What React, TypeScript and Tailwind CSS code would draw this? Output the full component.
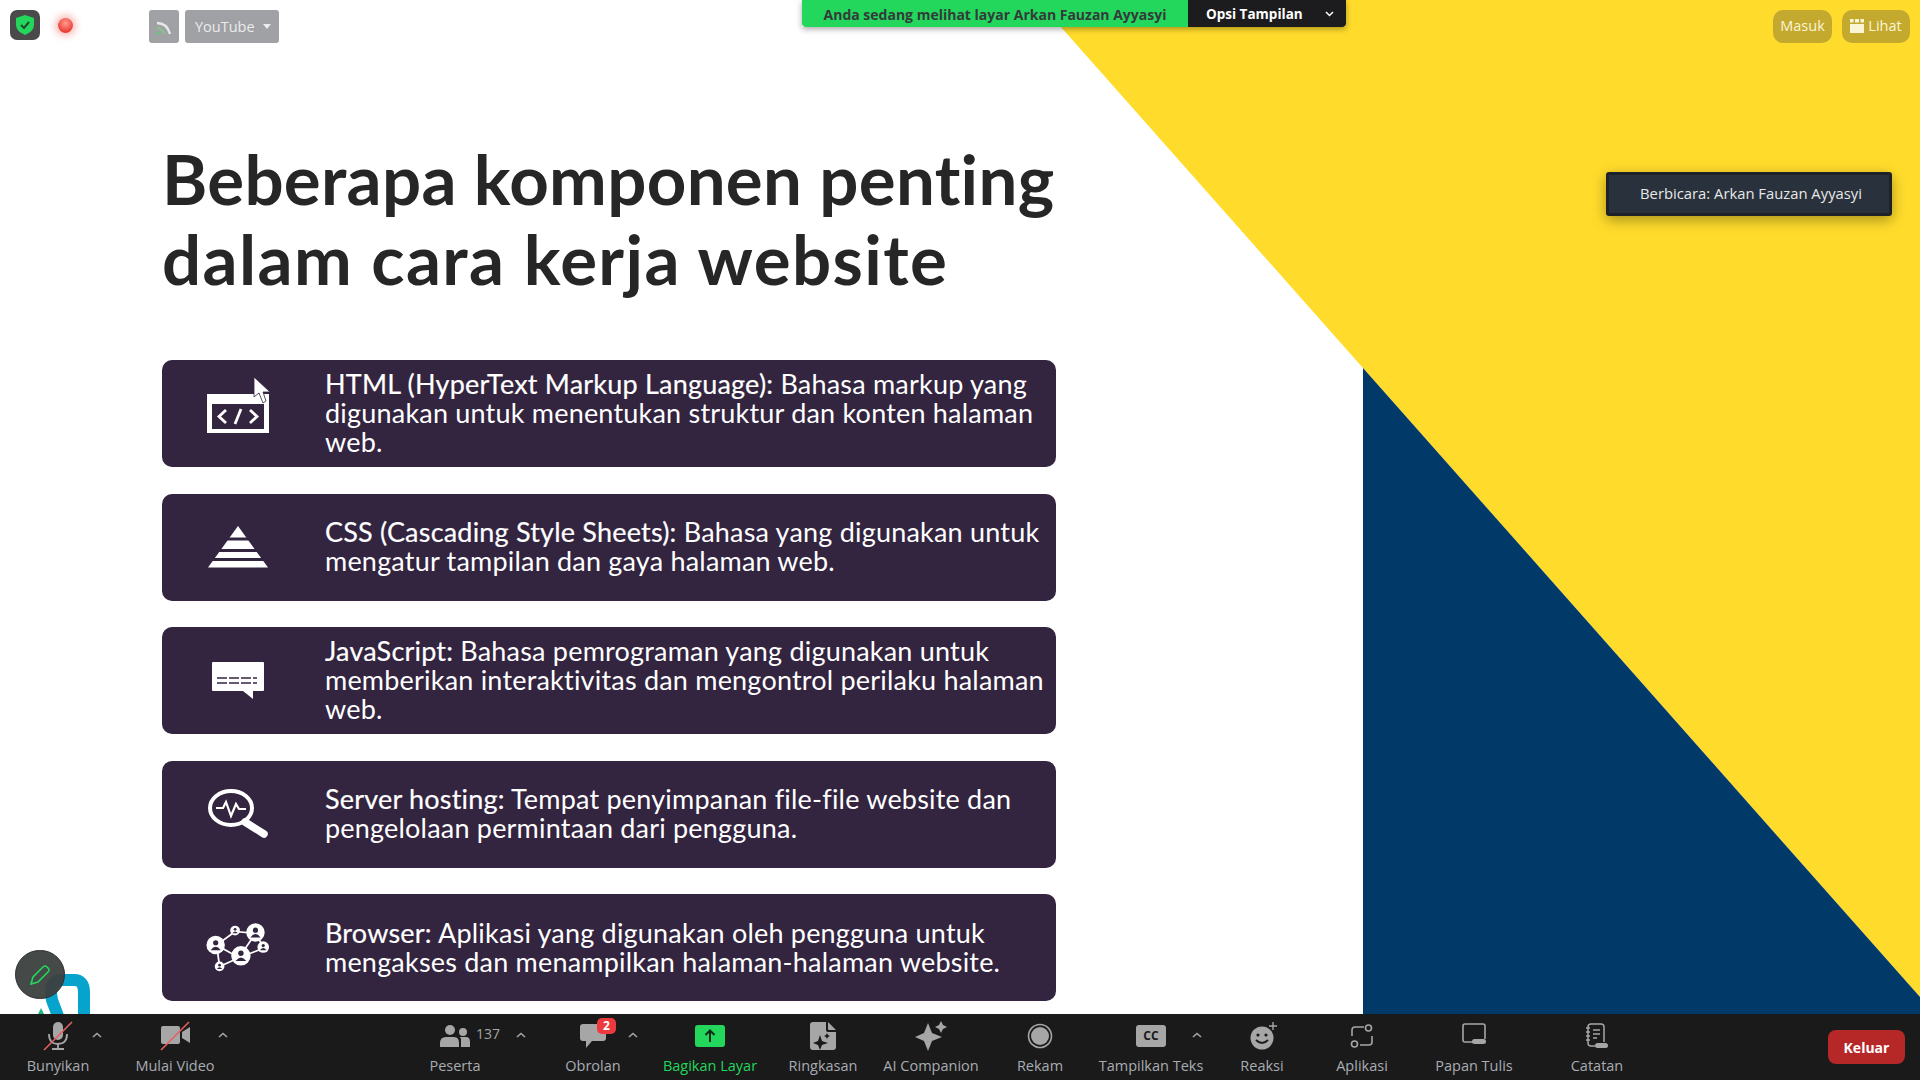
import React from "react";

const uiFont = "font-['Open_Sans','Noto_Sans',sans-serif]";

const cards = [
    {
        icon: <HtmlIcon />,
        lead: "HTML (HyperText Markup Language):",
        lines: [" Bahasa markup yang", "digunakan untuk menentukan struktur dan konten halaman", "web."]
    },
    {
        icon: <PyramidIcon />,
        lead: "CSS (Cascading Style Sheets):",
        lines: [" Bahasa yang digunakan untuk", "mengatur tampilan dan gaya halaman web."]
    },
    {
        icon: <ChatIcon />,
        lead: "JavaScript:",
        lines: [" Bahasa pemrograman yang digunakan untuk", "memberikan interaktivitas dan mengontrol perilaku halaman", "web."]
    },
    {
        icon: <SearchIcon />,
        lead: "Server hosting:",
        lines: [" Tempat penyimpanan file-file website dan", "pengelolaan permintaan dari pengguna."]
    },
    {
        icon: <NetworkIcon />,
        lead: "Browser:",
        lines: [" Aplikasi yang digunakan oleh pengguna untuk", "mengakses dan menampilkan halaman-halaman website."]
    }
];

function HtmlIcon() {
    return (
        <svg width="64" height="40" viewBox="0 0 64 40">
            <path d="M1 0H63V39H1Z" fill="#fff" />
            <path d="M6 10H58V35H6Z" fill="#33243f" />
            <path d="M20 16L13 22.500L20 29M44 16L51 22.500L44 29M35 15L29 30" fill="none" stroke="#fff" strokeWidth="2.800" />
        </svg>
    );
}

function PyramidIcon() {
    return (
        <svg width="60" height="42" viewBox="0 0 60 42">
            <path d="M30 0L60 41.500H0Z" fill="#fff" />
            <path d="M0 13H60M0 24.500H60M0 33.500H60" stroke="#33243f" strokeWidth="2.800" />
        </svg>
    );
}

function ChatIcon() {
    return (
        <svg width="54" height="38" viewBox="0 0 54 38">
            <path d="M2 0H52Q53 0 53 1V28Q53 29 52 29H42V37L32 29H2Q1 29 1 28V1Q1 0 2 0Z" fill="#fff" />
            <path d="M6 16H46M6 21H46" stroke="#33243f" strokeWidth="1.600" strokeDasharray="10 2" />
        </svg>
    );
}

function SearchIcon() {
    return (
        <svg width="62" height="50" viewBox="0 0 62 50">
            <ellipse cx="24" cy="19" rx="21" ry="17" fill="none" stroke="#fff" strokeWidth="4" />
            <path d="M38 33L57 45" stroke="#fff" strokeWidth="7.500" strokeLinecap="round" />
            <path d="M9 19H16L19 13L24 27L29 15L32 20H39" fill="none" stroke="#fff" strokeWidth="2.200" />
        </svg>
    );
}

function Node({ x, y, r }: { x: number; y: number; r: number }) {
    return (
        <g>
            <circle cx={x} cy={y} r={r} fill="#fff" />
            <circle cx={x} cy={y - r * 0.25} r={r * 0.28} fill="#33243f" />
            <path d={`M${x - r * 0.55} ${y + r * 0.55}Q${x} ${y - r * 0.2} ${x + r * 0.55} ${y + r * 0.55}Z`} fill="#33243f" />
        </g>
    );
}

function NetworkIcon() {
    return (
        <svg width="66" height="50" viewBox="0 0 68 50">
            <path d="M31 8L12 22L35 35L52 10L31 8M12 22L15 44L35 35L61 25L52 10" fill="none" stroke="#fff" strokeWidth="1.800" />
            <Node x={31} y={7} r={5} />
            <Node x={52} y={9} r={9.500} />
            <Node x={11} y={22} r={9.500} />
            <Node x={37} y={33} r={10} />
            <Node x={60} y={24} r={6} />
            <Node x={15} y={44} r={5} />
        </svg>
    );
}

function Caret({ className }: { className: string }) {
    return (
        <svg className={`absolute top-[18px] ${className}`} width="10" height="6" viewBox="0 0 10 6">
            <path d="M1 5L5 1.500L9 5" fill="none" stroke="#a6a6a6" strokeWidth="1.600" />
        </svg>
    );
}

const gray = "#a6a6a6";

const toolbarItems = [
    {
        label: "Bunyikan",
        className: "ml-[28px] w-[60px]",
        caret: "left-[64px]",
        icon: (
            <svg width="30" height="30" viewBox="0 0 30 30">
                <rect x="10" y="1" width="10" height="18" rx="5" fill={gray} />
                <path d="M6 13Q6 23 15 23Q24 23 24 13M15 23V28M9 28H21" fill="none" stroke={gray} strokeWidth="1.800" />
                <path d="M1 29L29 1" stroke="#e5605d" strokeWidth="1.600" />
            </svg>
        )
    },
    {
        label: "Mulai Video",
        className: "ml-[42px] w-[90px]",
        caret: "left-[88px]",
        icon: (
            <svg width="32" height="30" viewBox="0 0 32 30">
                <path d="M2 7Q2 5 4 5H19Q21 5 21 7V21Q21 23 19 23H4Q2 23 2 21Z" fill={gray} />
                <path d="M23 11L31 6V22L23 17Z" fill={gray} />
                <path d="M2 29L30 1" stroke="#e5605d" strokeWidth="1.600" />
            </svg>
        )
    },
    {
        label: "Peserta",
        className: "ml-[185px] w-[100px]",
        caret: "left-[111px]",
        icon: (
            <span className="flex h-[30px] w-[100px] items-start gap-[6px] pl-[35px]">
                <svg className="mt-[4px]" width="30" height="22" viewBox="0 0 30 22">
                    <circle cx="10" cy="5" r="5" fill={gray} />
                    <circle cx="23" cy="7" r="4" fill={gray} />
                    <path d="M0 22V18Q0 12 6 12H14Q19 12 19 18V22Z" fill={gray} />
                    <path d="M21 22V15Q21 12 19 12H26Q30 12 30 17V22Z" fill={gray} />
                </svg>
                <span className="mt-[2px] text-[14px] text-[#a6a6a6]">137</span>
            </span>
        )
    },
    {
        label: "Obrolan",
        className: "ml-[48px] w-[80px]",
        caret: "left-[75px]",
        icon: (
            <span className="relative block h-[30px] w-[30px]">
                <svg className="mt-[3px] ml-[2px]" width="27" height="24" viewBox="0 0 27 24">
                    <path d="M3 0H23Q26 0 26 3V14Q26 17 23 17H12L6 24V17H3Q0 17 0 14V3Q0 0 3 0Z" fill={gray} />
                </svg>
                <span className="absolute left-[19px] top-[-3px] flex h-[16px] w-[19px] items-center justify-center rounded-[5px] bg-[#ee3a3f] text-[12px] font-bold text-white">
                    2
                </span>
            </span>
        )
    },
    {
        label: "Bagikan Layar",
        className: "ml-[27px] w-[100px]",
        labelClass: "text-[#22d75c]",
        icon: (
            <svg width="30" height="30" viewBox="0 0 30 30">
                <rect x="0" y="4" width="30" height="22" rx="3" fill="#22d75c" />
                <path d="M15 21V10M10.500 14L15 9.500L19.500 14" fill="none" stroke="#10291a" strokeWidth="2" />
            </svg>
        )
    },
    {
        label: "Ringkasan",
        className: "ml-[25px] w-[76px]",
        icon: (
            <svg width="28" height="30" viewBox="0 0 28 30">
                <path d="M4 1H17V9Q17 11 19 11H27V26Q27 29 24 29H4Q1 29 1 26V4Q1 1 4 1Z" fill={gray} />
                <path d="M19 1L27 9H20Q19 9 19 8Z" fill={gray} />
                <path d="M11 14L13 20L19 22L13 24L11 29L9 24L4 22L9 20Z" fill="#1a1a1a" />
                <path d="M18 12L19 14L21 15L19 16L18 18L17 16L15 15L17 14Z" fill="#1a1a1a" />
            </svg>
        )
    },
    {
        label: "AI Companion",
        className: "ml-[20px] w-[100px]",
        icon: (
            <svg width="32" height="30" viewBox="0 0 32 30">
                <path d="M13 2L17 12L27 16L17 20L13 30L9 20L0 16L9 12Z" fill={gray} />
                <path d="M26 0L28 4L32 6L28 8L26 12L24 8L20 6L24 4Z" fill={gray} />
            </svg>
        )
    },
    {
        label: "Rekam",
        className: "ml-[29px] w-[60px]",
        icon: (
            <svg width="26" height="30" viewBox="0 0 26 30">
                <circle cx="13" cy="15" r="11.500" fill="none" stroke={gray} strokeWidth="1.600" />
                <circle cx="13" cy="15" r="9" fill={gray} />
            </svg>
        )
    },
    {
        label: "Tampilkan Teks",
        className: "ml-[26px] w-[110px]",
        caret: "left-[96px]",
        icon: (
            <span className="flex h-[22px] w-[30px] items-center justify-center rounded-[3px] bg-[#a6a6a6] text-[12px] font-bold text-[#1a1a1a]">
                CC
            </span>
        )
    },
    {
        label: "Reaksi",
        className: "ml-[26px] w-[60px]",
        icon: (
            <svg width="32" height="30" viewBox="0 0 32 30">
                <circle cx="16" cy="17" r="11.500" fill={gray} />
                <circle cx="12" cy="14" r="1.600" fill="#1a1a1a" />
                <circle cx="20" cy="14" r="1.600" fill="#1a1a1a" />
                <path d="M10 19Q16 25 22 19" fill="none" stroke="#1a1a1a" strokeWidth="1.800" />
                <path d="M27 1V9M23 5H31" stroke={gray} strokeWidth="1.400" />
            </svg>
        )
    },
    {
        label: "Aplikasi",
        className: "ml-[35px] w-[70px]",
        icon: (
            <svg width="24" height="30" viewBox="0 0 24 30">
                <path d="M14 6H5Q2 6 2 9V15M22 15V21Q22 24 19 24H10" fill="none" stroke={gray} strokeWidth="1.600" />
                <circle cx="18.500" cy="7" r="3" fill="none" stroke={gray} strokeWidth="1.600" />
                <circle cx="4.500" cy="23" r="3" fill="none" stroke={gray} strokeWidth="1.600" />
            </svg>
        )
    },
    {
        label: "Papan Tulis",
        className: "ml-[32px] w-[90px]",
        icon: (
            <svg width="26" height="30" viewBox="0 0 26 30">
                <path d="M12 21H4Q2 21 2 19V5Q2 3 4 3H22Q24 3 24 5V18" fill="none" stroke={gray} strokeWidth="1.600" />
                <rect x="11" y="18" width="14" height="5" rx="2.500" fill={gray} />
            </svg>
        )
    },
    {
        label: "Catatan",
        className: "ml-[43px] w-[70px]",
        icon: (
            <svg width="24" height="30" viewBox="0 0 24 30">
                <path d="M10 25H6Q3 25 3 22V6Q3 3 6 3H16Q19 3 19 6V21" fill="none" stroke={gray} strokeWidth="1.500" />
                <path d="M1 7H5M1 11H5M1 15H5M1 19H5M8 9H15M8 13H15M8 17H12" stroke={gray} strokeWidth="1.300" />
                <rect x="10" y="22" width="13" height="5" rx="2.500" fill={gray} />
            </svg>
        )
    }
];

const Toolbar: React.FC = () => {
    return (
        <div className={`flex h-[66px] shrink-0 bg-[#1a1a1a] ${uiFont}`}>
            {toolbarItems.map(item => (
                <div key={item.label} className={`relative flex flex-col items-center pt-[7px] ${item.className}`}>
                    <div className="flex h-[30px] items-center justify-center">{item.icon}</div>
                    {item.caret && <Caret className={item.caret} />}
                    <span className={`mt-[6px] whitespace-nowrap text-[14.500px] font-medium leading-[18px] ${item.labelClass ?? "text-[#a8acb2]"}`}>
                        {item.label}
                    </span>
                </div>
            ))}
            <button className="ml-auto mr-[15px] mt-[16px] h-[34px] w-[77px] rounded-[8px] bg-[#b62828] text-[14px] font-bold text-white">
                Keluar
            </button>
        </div>
    );
};

// meeting controls that float over the top of the shared slide
const TopBar: React.FC = () => {
    return (
        <div className={`absolute inset-x-0 top-0 flex items-start ${uiFont}`}>
            <div className="flex items-start pl-[10px] pt-[10px]">
                <div className="flex h-[30px] w-[30px] items-center justify-center rounded-[7px] bg-[#4a4a4a]">
                    <svg width="18" height="20" viewBox="0 0 18 20">
                        <path d="M9 0L18 3V10Q18 16 9 20Q0 16 0 10V3Z" fill="#22d75c" />
                        <path d="M5 10L8 13L13 7" fill="none" stroke="#24492f" strokeWidth="2" />
                    </svg>
                </div>
                <div className="ml-[18px] mt-[8px] h-[15px] w-[15px] rounded-full bg-[radial-gradient(circle_at_50%_35%,#ff9c90,#e9372e_75%)] shadow-[0_0_7px_3px_rgba(240,84,76,0.4)]" />
                <div className="ml-[76px] flex h-[33px] w-[30px] items-center justify-center rounded-[3px] bg-[#a0a1a5]">
                    <svg width="16" height="16" viewBox="0 0 16 16">
                        <path d="M1 4Q11 4 14 15" fill="none" stroke="#e8e8e8" strokeWidth="2.400" />
                        <path d="M1 9Q6 9 8 15" fill="none" stroke="#7fc98f" strokeWidth="2" />
                        <circle cx="2" cy="14" r="1.500" fill="#5fc777" />
                    </svg>
                </div>
                <div className="ml-[6px] flex h-[33px] w-[94px] items-center rounded-[3px] bg-[#a0a1a5] pl-[10px] text-[14.500px] text-[#ececec]">
                    YouTube
                    <svg className="ml-[8px]" width="8" height="5" viewBox="0 0 8 5">
                        <path d="M0 0H8L4 5Z" fill="#ececec" />
                    </svg>
                </div>
            </div>

            <div className="ml-[523px] flex h-[27px] shadow-[0_2px_6px_rgba(0,0,0,0.35)]">
                <div className="flex w-[386px] items-center justify-center rounded-bl-[4px] bg-[#22d75c] pt-[1px] text-[14px] font-bold text-[#333b3a]">
                    Anda sedang melihat layar Arkan Fauzan Ayyasyi
                </div>
                <div className="flex w-[158px] items-center rounded-br-[4px] bg-[#1c1c1e] pl-[18px] pt-[1px] text-[13.500px] font-bold text-white">
                    Opsi Tampilan
                    <svg className="ml-[22px]" width="9" height="6" viewBox="0 0 9 6">
                        <path d="M1 1L4.500 4.500L8 1" fill="none" stroke="#fff" strokeWidth="1.500" />
                    </svg>
                </div>
            </div>

            <div className="ml-auto flex gap-[10px] pr-[10px] pt-[10px]">
                <div className="flex h-[33px] w-[59px] items-center justify-center rounded-[10px] bg-[#c4a92f] pb-[2px] text-[14.500px] text-[#fbf5d8]">
                    Masuk
                </div>
                <div className="flex h-[33px] w-[68px] items-center justify-center gap-[4px] rounded-[10px] bg-[#c4a92f] pb-[2px] text-[14.500px] text-[#fbf5d8]">
                    <svg width="14" height="14" viewBox="0 0 14 14">
                        <path d="M0 5H14V14H0Z M0 0H3.500V3.500H0Z M5 0H9V3.500H5Z M10.500 0H14V3.500H10.500Z" fill="#fbf5d8" />
                    </svg>
                    Lihat
                </div>
            </div>

            <div className="absolute left-[1606px] top-[172px] flex h-[44px] w-[286px] items-center justify-center rounded-[3px] border-[3px] border-[#1e2228] bg-[#29313c] pb-[2px] pl-[4px] text-[14.800px] text-[#e8e8e8] shadow-[0_4px_14px_rgba(0,0,0,0.35)]">
                Berbicara: Arkan Fauzan Ayyasyi
            </div>
        </div>
    );
};

const App: React.FC = () => {
    return (
        <div className="flex h-[1080px] w-[1920px] flex-col overflow-hidden bg-white">
            <div className="relative flex-1 pl-[162px] pt-[139px]">
                {/* slide artwork */}
                <svg className="absolute inset-0" width="1920" height="1014" viewBox="0 0 1920 1014">
                    <path d="M1037 0H1920V997Z" fill="#ffdc2b" />
                    <path d="M1363 368L1920 997V1014H1363Z" fill="#013a68" />
                    <path d="M58 1016L52 1000Q48 980 62 980H74Q84 980 84 992V1014" fill="none" stroke="#06a3cc" strokeWidth="12" />
                    <path d="M41 1008L44 1014H38Z" fill="#1eb980" />
                </svg>

                <div className="relative [font-variant-ligatures:none]">
                    <h1 className="whitespace-nowrap font-['Lato',sans-serif] text-[69px] font-bold leading-[80px] text-[#262626]">
                        <span className="block tracking-[0.3px]">Beberapa komponen penting</span>
                        <span className="block tracking-[1.4px]">dalam cara kerja website</span>
                    </h1>

                    <div className="mt-[61px] flex flex-col gap-[26.600px]">
                        {cards.map(card => (
                            <div key={card.lead} className="flex h-[107px] w-[894px] items-center rounded-[10px] bg-[#33243f] font-['Lato',sans-serif] text-white">
                                <div className="mr-[11px] flex w-[152px] shrink-0 justify-center">{card.icon}</div>
                                <p className="whitespace-nowrap pb-[2px] text-[27px] leading-[29px] tracking-[0.2px]">
                                    <span className="[-webkit-text-stroke:0.2px_white]">{card.lead}</span>
                                    {card.lines.map((line, i) => (
                                        <React.Fragment key={line}>
                                            {i > 0 && <br />}
                                            {line}
                                        </React.Fragment>
                                    ))}
                                </p>
                            </div>
                        ))}
                    </div>
                </div>

                {/* annotate control and pointer, both float over the slide */}
                <div className="absolute left-[15px] top-[950px] flex h-[49px] w-[50px] items-center justify-center rounded-full border border-[#2c2f2e] bg-[#3b3f3e]/95">
                    <svg width="20" height="20" viewBox="0 0 20 20">
                        <path d="M1 19L3 12L13 2Q15 0 17 2L18 3Q20 5 18 7L8 17Z" fill="none" stroke="#22d75c" strokeWidth="1.600" />
                    </svg>
                </div>
                <svg className="absolute left-[253px] top-[377px]" width="18" height="27" viewBox="0 0 18 27">
                    <path d="M1 0V20L6 16L10 26L13 24L10 15H17Z" fill="#fff" stroke="#33243f" strokeWidth="0.800" />
                </svg>

                <TopBar />
            </div>
            <Toolbar />
        </div>
    );
};

export default App;
